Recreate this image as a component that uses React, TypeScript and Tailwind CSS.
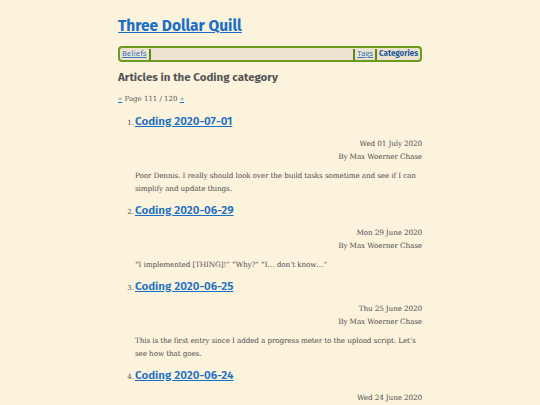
import React from "react";

const sans = { fontFamily: '"Fira Sans", Roboto, "Noto Sans", sans-serif' };
const serif = { fontFamily: '"Roboto Slab", "DejaVu Serif", serif' };

interface Article {
  title: string;
  date: string;
  summary: string;
}

const articles: Article[] = [
  {
    title: "Coding 2020-07-01",
    date: "Wed 01 July 2020",
    summary:
      "Poor Dennis. I really should look over the build tasks sometime and see if I can simplify and update things.",
  },
  {
    title: "Coding 2020-06-29",
    date: "Mon 29 June 2020",
    summary: "\u201cI implemented [THING]!\u201d \u201cWhy?\u201d \u201cI\u2026 don\u2019t know\u2026\u201d",
  },
  {
    title: "Coding 2020-06-25",
    date: "Thu 25 June 2020",
    summary:
      "This is the first entry since I added a progress meter to the upload script. Let\u2019s see how that goes.",
  },
  {
    title: "Coding 2020-06-24",
    date: "Wed 24 June 2020",
    summary: "",
  },
];

function NavBar() {
  return (
    <nav className="mt-[7px] flex h-[16px] items-center rounded-[4px] border-2 border-[#6b9a1f] bg-[#ebe3cf] px-[2px] text-[8px] leading-none" style={sans}>
      <a href="#" className="text-[#3a7bbf] underline">Beliefs</a>
      <span className="ml-[2px] h-[11px] w-[2px] bg-[#5c8a1a]" />
      <span className="flex-1" />
      <span className="mr-[2px] h-[11px] w-[2px] bg-[#5c8a1a]" />
      <a href="#" className="text-[#3a7bbf] underline">Tags</a>
      <span className="mx-[2px] h-[11px] w-[2px] bg-[#5c8a1a]" />
      <a href="#" className="font-bold text-[#1f5a9a]">Categories</a>
    </nav>
  );
}

function ArticleItem({ article, index }: { article: Article; index: number }) {
  return (
    <li className="flex flex-col">
      <div className="flex h-[18px] items-baseline">
        <span className="w-[16px] text-right text-[7px] text-[#555]" style={serif}>{index}.</span>
        <a href="#" className="ml-[1px] text-[11.6px] font-semibold leading-[18px] text-[#1a6fc4] underline" style={sans}>
          {article.title}
        </a>
      </div>
      <div className="mt-[7px] text-right text-[7.3px] leading-[13px] tracking-[-0.15px] text-[#4f4f4f]" style={serif}>
        <div>{article.date}</div>
        <div>By Max Woerner Chase</div>
      </div>
      {article.summary && (
        <p className="mb-[6px] mt-[6px] pl-[17px] text-[7.3px] leading-[13px] tracking-[-0.15px] text-[#4f4f4f]" style={serif}>
          {article.summary}
        </p>
      )}
    </li>
  );
}

export default function App() {
  return (
    <div className="h-[405px] overflow-hidden bg-[#fcf3dc]">
      <div className="mx-auto w-[304px] pt-[13px]">
        <h1 className="text-[15.5px] font-bold leading-[26px] text-[#1a6fc4] underline" style={sans}>
          <a href="#">Three Dollar Quill</a>
        </h1>
        <NavBar />
        <h2 className="mt-[7px] text-[11.5px] font-bold leading-[16px] text-[#555]" style={sans}>
          Articles in the Coding category
        </h2>
        <div className="mt-[9px] text-[7px] text-[#555]" style={serif}>
          <a href="#" className="text-[#1a6fc4] underline">&laquo;</a> Page 111 / 120{" "}
          <a href="#" className="text-[#1a6fc4] underline">&raquo;</a>
        </div>
        <ol className="mt-[7px]">
          {articles.map((a, i) => (
            <ArticleItem key={a.title} article={a} index={i + 1} />
          ))}
        </ol>
      </div>
    </div>
  );
}
